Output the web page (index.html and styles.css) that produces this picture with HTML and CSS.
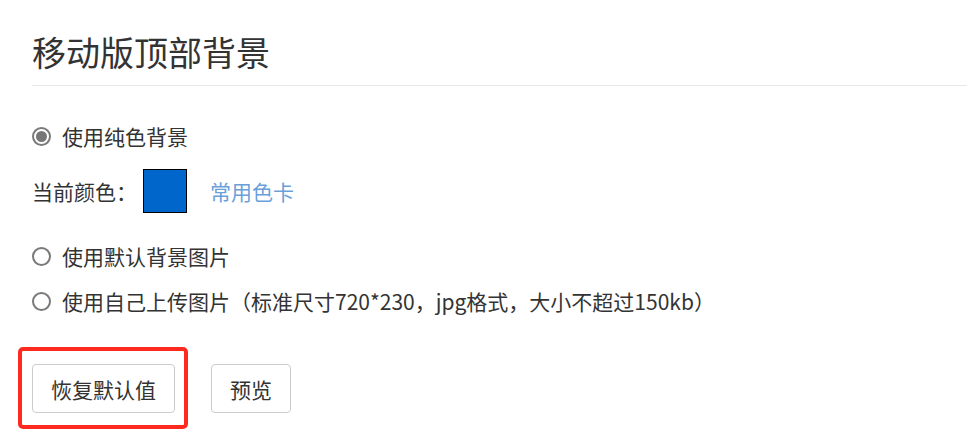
FILE: index.html
```html
<!DOCTYPE html>
<html lang="zh-CN">
<head>
<meta charset="utf-8">
<title>移动版顶部背景</title>
<link rel="stylesheet" href="styles.css">
</head>
<body>
<div class="page">
  <h1 class="title">移动版顶部背景</h1>
  <div class="form">
    <label class="radio-row r1"><span class="radio checked"></span><span class="label">使用纯色背景</span></label>
    <div class="color-row">
      <span class="label">当前颜色：</span>
      <span class="swatch"></span>
      <a class="link" href="#">常用色卡</a>
    </div>
    <label class="radio-row r3"><span class="radio"></span><span class="label">使用默认背景图片</span></label>
    <label class="radio-row r4"><span class="radio"></span><span class="label">使用自己上传图片（标准尺寸720*230，jpg格式，大小不超过150kb）</span></label>
    <div class="actions">
      <span class="highlight"><button class="btn">恢复默认值</button></span>
      <button class="btn">预览</button>
    </div>
  </div>
</div>
</body>
</html>
```
FILE: styles.css
```css
html, body {
  margin: 0;
  padding: 0;
  background: #fff;
}
body {
  font-family: "Noto Sans CJK SC", "Noto Sans", sans-serif;
  color: #333;
  min-height: 438px;
}
.page {
  padding-left: 32px;
  padding-bottom: 25px;
}
.title {
  margin: 0;
  padding-top: 32px;
  padding-bottom: 13px;
  font-size: 34px;
  line-height: 40px;
  font-weight: 400;
  color: #333;
  border-bottom: 1px solid #e8e8e8;
}
.form {
  font-size: 21px;
}
.radio-row {
  display: flex;
  align-items: center;
  height: 30px;
  line-height: 30px;
}
.r1 { margin-top: 35px; }
.r3 { margin-top: 28px; }
.r4 { margin-top: 15px; }
.radio {
  box-sizing: border-box;
  width: 19px;
  height: 19px;
  border: 2px solid #7a7a7a;
  border-radius: 50%;
  margin-right: 11px;
  display: flex;
  align-items: center;
  justify-content: center;
}
.radio.checked::before {
  content: "";
  width: 11px;
  height: 11px;
  border-radius: 50%;
  background: #777;
}
.color-row {
  display: flex;
  align-items: center;
  margin-top: 18px;
  height: 44px;
}
.swatch {
  box-sizing: border-box;
  width: 44px;
  height: 44px;
  background: #0066cc;
  border: 1px solid #000;
  margin-left: 6px;
  margin-right: 23px;
}
.link {
  color: #6a9fd9;
  text-decoration: none;
}
.actions {
  display: flex;
  gap: 36px;
  margin-top: 48px;
}
.highlight {
  position: relative;
  display: flex;
}
.highlight::after {
  content: "";
  position: absolute;
  top: -17px;
  left: -14px;
  right: -13px;
  bottom: -16px;
  border: 4px solid #ff2a1f;
  border-radius: 5px;
  pointer-events: none;
}
.btn {
  box-sizing: border-box;
  height: 49px;
  padding: 0 18px;
  font-family: inherit;
  font-size: 21px;
  color: #333;
  background: #fff;
  border: 1px solid #cccccc;
  border-radius: 4px;
}
```
